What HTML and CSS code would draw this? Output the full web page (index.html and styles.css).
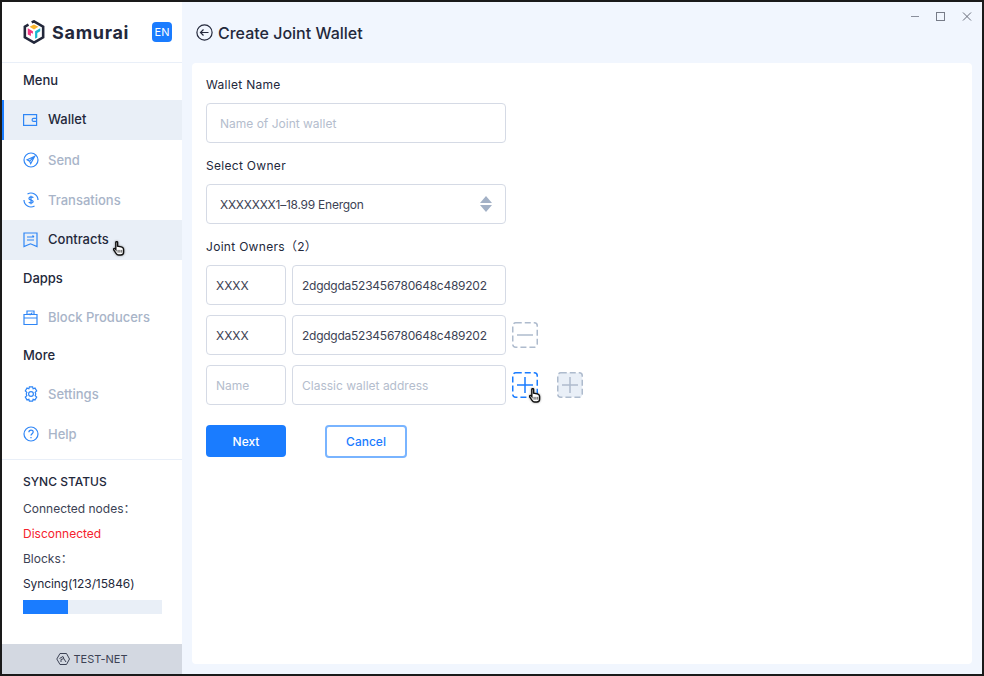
FILE: index.html
```html
<!DOCTYPE html>
<html lang="en">
<head>
    <meta charset="UTF-8">
    <title>Samurai - Create Joint Wallet</title>
    <link rel="stylesheet" href="styles.css">
</head>
<body>
    <div class="window">
        <aside class="sidebar">
            <div class="brand">
                <svg class="logo" width="22" height="24" viewBox="0 0 24 26">
                    <path d="M9.5 2.6 12 1.4l10 5.800v11.600L12 24.600 2 18.800V7.200l4-2.300" fill="none" stroke="#23283b" stroke-width="2.800"/>
                    <path d="M7.200 7.400 12 4.800l4.800 2.600L12 10.200z" fill="#f9b52c"/>
                    <path d="M5.200 9l5.600 3.200v2.800L8.600 13.800v3.600L5.200 15.600z" fill="#f0357f"/>
                    <path d="M18.800 9l-5.600 3.200V20.400l2.400-1.400v-5l3.200-1.800z" fill="#18b8d0"/>
                </svg>
                <span class="brand-name">Samurai</span>
                <span class="lang">EN</span>
            </div>

            <div class="nav-title nav-title-menu">Menu</div>
            <a class="nav-item selected">
                <svg width="16" height="16" viewBox="0 0 16 16" fill="none" stroke="#2f86f6" stroke-width="1.200">
                    <rect x=".6" y="2.600" width="13" height="10.800"/>
                    <path d="M13.600 6.400h-3a1.500 1.500 0 0 0 0 3h3"/>
                </svg>
                <span class="nav-text raised">Wallet</span>
            </a>
            <a class="nav-item">
                <svg width="16" height="16" viewBox="0 0 16 16" fill="none" stroke="#2f86f6" stroke-width="1.200">
                    <circle cx="8" cy="8" r="7"/>
                    <path d="M11.800 4.200 4.200 7.800l2.400 1.300 1.100 2.600zM11.800 4.200 6.600 9.100"/>
                </svg>
                <span class="nav-text muted">Send</span>
            </a>
            <a class="nav-item">
                <svg width="16" height="16" viewBox="0 0 16 16" fill="none" stroke="#2f86f6" stroke-width="1.200">
                    <path d="M4.500 2A7 7 0 0 1 15 8M11.500 14A7 7 0 0 1 1 8"/>
                    <path d="M10.300 5.800C9.800 4.700 6.200 4.500 5.900 6.300c-.3 2.200 4.500 1.400 4.300 3.500-.2 1.700-3.800 1.500-4.400.2M8 3.800v8.400"/>
                </svg>
                <span class="nav-text muted">Transations</span>
            </a>
            <a class="nav-item active">
                <svg width="16" height="16" viewBox="0 0 16 16" fill="none" stroke="#2f86f6" stroke-width="1.200">
                    <path d="M1 1h13v13.600l-6.500-2.800L1 14.600z"/>
                    <path d="M4 5h7M4 8h7M9.500 3.500 11 5"/>
                </svg>
                <span class="nav-text raised">Contracts</span>
            </a>

            <div class="nav-title">Dapps</div>
            <a class="nav-item">
                <svg width="16" height="16" viewBox="0 0 16 16" fill="none" stroke="#2f86f6" stroke-width="1.200">
                    <path d="M1 4.500h13v10H1zM1 8h13"/>
                    <path d="M4 4.500V1h7v3.500M5.600 3.600l1.500 1.200 2.300-2.200"/>
                </svg>
                <span class="nav-text raised muted">Block Producers</span>
            </a>

            <div class="nav-title nav-title-more">More</div>
            <a class="nav-item">
                <svg width="16" height="16" viewBox="0 0 16 16" fill="none" stroke="#2f86f6" stroke-width="1.200">
                    <path d="M6.400.8h3.200l.5 2 1.900-.7 1.700 2.800-1.500 1.400a3 3 0 0 1 0 3.400l1.500 1.400-1.700 2.800-1.900-.7-.5 2H6.400l-.5-2-1.900.7-1.700-2.800 1.500-1.400a3 3 0 0 1 0-3.400L2.300 4.900 4 2.100l1.900.7z"/>
                    <circle cx="8" cy="8" r="2.400"/>
                </svg>
                <span class="nav-text muted">Settings</span>
            </a>
            <a class="nav-item">
                <svg width="16" height="16" viewBox="0 0 16 16" fill="none" stroke="#2f86f6" stroke-width="1.200">
                    <circle cx="8" cy="8" r="7"/>
                    <path d="M5.900 6.200c0-2.800 4.300-2.800 4.300-.2 0 1.700-2.200 1.700-2.200 3.500"/>
                    <path d="M8 11v1.200"/>
                </svg>
                <span class="nav-text muted">Help</span>
            </a>

            <div class="sync">
                <div class="sync-title">SYNC STATUS</div>
                <div class="sync-line">Connected nodes：</div>
                <div class="sync-line danger">Disconnected</div>
                <div class="sync-line">Blocks：</div>
                <div class="sync-line dark">Syncing(123/15846)</div>
                <div class="progress"><div class="progress-bar" style="width: 32.4%"></div></div>
            </div>

            <div class="net">
                <svg width="14" height="14" viewBox="0 0 14 14" fill="none" stroke="#3c4254" stroke-width="1">
                    <path d="M4 1.500h6.500L13.500 7l-3 5.500H4L.8 7z"/>
                    <path d="M3.500 6.500 7 4.500l1 2-3 1v2.500M8 7l2 3"/>
                </svg>
                TEST-NET
            </div>
        </aside>

        <main class="main">
            <div class="topbar">
                <svg class="back" width="17" height="17" viewBox="0 0 17 17" fill="none" stroke="#23283b" stroke-width="1.200">
                    <circle cx="8.500" cy="8.500" r="7.600"/>
                    <path d="M12.500 8.500h-8M7.500 5.500l-3 3 3 3"/>
                </svg>
                <h1>Create Joint Wallet</h1>
                <div class="win-controls">
                    <svg width="10" height="10" viewBox="0 0 10 10" fill="none" stroke="#8a8f9c"><path d="M1 4.500h8"/></svg>
                    <svg width="10" height="10" viewBox="0 0 10 10" fill="none" stroke="#777c88"><rect x=".5" y=".5" width="8" height="8"/></svg>
                    <svg width="10" height="10" viewBox="0 0 10 10" fill="none" stroke="#666b78"><path d="M1 .5l8 8M9 .5l-8 8"/></svg>
                </div>
            </div>

            <section class="card">
                <div class="form-group">
                    <div class="label">Wallet Name</div>
                    <div class="field wide placeholder">Name of Joint wallet</div>
                </div>

                <div class="form-group">
                    <div class="label">Select Owner</div>
                    <div class="field wide select">
                        <span class="value">XXXXXXX1–18.99 Energon</span>
                        <svg width="12" height="16" viewBox="0 0 12 16" fill="#a3b1c6">
                            <path d="M6 0l6 7H0zM6 16l6-7H0z"/>
                        </svg>
                    </div>
                </div>

                <div class="form-group">
                    <div class="label">Joint Owners（2）</div>
                    <div class="owners">
                        <div class="owner-row">
                            <div class="field name-field">XXXX</div>
                            <div class="field addr-field value">2dgdgda523456780648c489202</div>
                        </div>
                        <div class="owner-row">
                            <div class="field name-field">XXXX</div>
                            <div class="field addr-field value">2dgdgda523456780648c489202</div>
                            <span class="dash-btn">
                                <svg class="dash-box" width="26" height="26" viewBox="0 0 26 26"><rect x=".75" y=".75" width="24.500" height="24.500" rx="3"/></svg>
                                <svg class="dash-sign" width="16" height="16" viewBox="0 0 16 16"><path d="M0 8h16"/></svg>
                            </span>
                        </div>
                        <div class="owner-row">
                            <div class="field name-field placeholder">Name</div>
                            <div class="field addr-field placeholder">Classic wallet address</div>
                            <span class="dash-btn hover">
                                <svg class="dash-box" width="26" height="26" viewBox="0 0 26 26"><rect x=".75" y=".75" width="24.500" height="24.500" rx="3"/></svg>
                                <svg class="dash-sign" width="16" height="16" viewBox="0 0 16 16"><path d="M0 8h16M8 0v16"/></svg>
                                <svg class="hand" width="12" height="15" viewBox="0 0 13 16">
                                    <path d="M3 1.500c0-1.300 2-1.300 2 0v4l4 .8c1.800.4 2.500 1.200 2.500 3v2.700c0 1.800-1.200 3-3 3H6c-1.300 0-2-.6-2.700-1.700L.8 9.500c-.6-1.200.8-2 1.700-1.100l.6.8z" fill="#fff" stroke="#111" stroke-width="1.500"/>
                                    <path d="M5.500 9.500v3M7.500 9.500v3M9.500 9.500v3" stroke="#111" stroke-width=".8"/>
                                </svg>
                            </span>
                            <span class="dash-btn filled">
                                <svg class="dash-box" width="26" height="26" viewBox="0 0 26 26"><rect x=".75" y=".75" width="24.500" height="24.500" rx="3"/></svg>
                                <svg class="dash-sign" width="16" height="16" viewBox="0 0 16 16"><path d="M0 8h16M8 0v16"/></svg>
                            </span>
                        </div>
                    </div>
                </div>

                <div class="actions">
                    <button class="btn btn-primary">Next</button>
                    <button class="btn btn-outline">Cancel</button>
                </div>
            </section>
        </main>

        <svg class="hand hand-nav" width="12" height="15" viewBox="0 0 13 16">
            <path d="M3 1.500c0-1.300 2-1.300 2 0v4l4 .8c1.800.4 2.500 1.200 2.500 3v2.700c0 1.800-1.200 3-3 3H6c-1.300 0-2-.6-2.700-1.700L.8 9.500c-.6-1.200.8-2 1.700-1.100l.6.8z" fill="#fff" stroke="#111" stroke-width="1.500"/>
            <path d="M5.500 9.500v3M7.500 9.500v3M9.500 9.500v3" stroke="#111" stroke-width=".8"/>
        </svg>
    </div>
</body>
</html>
```

FILE: styles.css
```css
* {
    box-sizing: border-box;
}
html, body {
    margin: 0;
    height: 100%;
    overflow: hidden;
}
body {
    font-family: Inter, "Noto Sans CJK SC", sans-serif;
    font-size: 12px;
    color: #23283b;
}
.window {
    position: relative;
    display: flex;
    width: 984px;
    height: 676px;
    border: 2px solid #1a1a1a;
    background: #f1f6fe;
}
.sidebar {
    display: flex;
    flex-direction: column;
    flex: 0 0 180px;
    background: #fff;
}
.brand {
    display: flex;
    align-items: center;
    flex: 0 0 61px;
    padding: 0 10px 0 21px;
    border-bottom: 1px solid #e9eff8;
}
.logo {
    flex: none;
}
.brand-name {
    margin-left: 7px;
    font-size: 18px;
    font-weight: 700;
    letter-spacing: .7px;
}
.lang {
    display: flex;
    align-items: center;
    justify-content: center;
    width: 20px;
    height: 20px;
    margin-left: auto;
    border-radius: 4px;
    background: #1a7cff;
    color: #fff;
    font-size: 11px;
}
.nav-title {
    display: flex;
    align-items: center;
    height: 38px;
    padding: 0 0 2px 21px;
    font-size: 13px;
    font-weight: 500;
}
.nav-title-menu {
    height: 37px;
    padding-bottom: 4px;
}
.nav-title-more {
    height: 36px;
}
.nav-item {
    display: flex;
    align-items: center;
    gap: 9px;
    height: 40px;
    padding-left: 21px;
    font-size: 13px;
    font-weight: 500;
}
.raised {
    margin-bottom: 2px;
}
.muted {
    color: #a8b4c8;
}
.nav-item.active,
.nav-item.selected {
    background: #e9eff7;
}
.nav-item.selected {
    border-left: 2px solid #1a7cff;
    padding-left: 19px;
}
.sync {
    margin-top: 5px;
    padding: 13px 20px 0 21px;
    border-top: 1px solid #e9eff8;
    flex: 1;
}
.sync-title {
    height: 18px;
    line-height: 18px;
    font-weight: 500;
}
.sync-line {
    height: 25px;
    line-height: 25px;
    color: #3c4254;
}
.sync-title + .sync-line {
    margin-top: 5px;
}
.sync-line.danger {
    color: #f5222d;
}
.sync-line.dark {
    color: #23283b;
    letter-spacing: -.1px;
}
.progress {
    height: 14px;
    margin-top: 4px;
    background: #e9eff7;
}
.progress-bar {
    height: 100%;
    background: #1a7cff;
}
.net {
    display: flex;
    align-items: center;
    justify-content: center;
    gap: 3px;
    flex: 0 0 30px;
    background: #d3d8e1;
    color: #3c4254;
    font-size: 11px;
}
.main {
    display: flex;
    flex-direction: column;
    flex: 1;
    padding: 0 10px 10px;
}
.topbar {
    position: relative;
    display: flex;
    align-items: center;
    flex: 0 0 61px;
    padding-left: 4px;
}
.back {
    flex: none;
}
h1 {
    margin: 0 0 0 5px;
    font-size: 16px;
    font-weight: 500;
}
.win-controls {
    position: absolute;
    top: 10px;
    right: 0;
    display: flex;
    gap: 16px;
}
.card {
    flex: 1;
    padding: 14px;
    border-radius: 4px;
    background: #fff;
}
.form-group {
    margin-bottom: 15px;
}
.label {
    height: 16px;
    line-height: 16px;
    margin-bottom: 10px;
    letter-spacing: .3px;
}
.field {
    display: flex;
    align-items: center;
    height: 40px;
    border: 1px solid #d5dae5;
    border-radius: 4px;
    background: #fff;
    color: #3c4254;
}
.field.wide {
    width: 300px;
    padding: 0 13px;
}
.field.placeholder {
    color: #b4bdcd;
}
.value {
    letter-spacing: -.25px;
}
.select {
    justify-content: space-between;
}
.owners {
    display: flex;
    flex-direction: column;
    gap: 10px;
}
.owner-row {
    display: flex;
    align-items: center;
    gap: 6px;
}
.name-field {
    width: 80px;
    padding-left: 9px;
}
.addr-field {
    width: 214px;
    padding-left: 9px;
}
.dash-btn {
    position: relative;
    display: flex;
    align-items: center;
    justify-content: center;
    width: 26px;
    height: 26px;
}
.dash-box {
    position: absolute;
    top: 0;
    left: 0;
    fill: none;
    stroke: #aebbcd;
    stroke-width: 1.5;
    stroke-dasharray: 6 3;
}
.dash-sign {
    position: relative;
    fill: none;
    stroke: #aebbcd;
    stroke-width: 1.5;
}
.hover .dash-box,
.hover .dash-sign {
    stroke: #1a7cff;
}
.filled {
    margin-left: 13px;
}
.filled .dash-box {
    fill: #e9eff7;
}
.hand {
    position: absolute;
    filter: drop-shadow(0 0 1px rgba(0,0,0,0.4));
}
.dash-btn .hand {
    left: 17px;
    top: 16px;
}
.hand-nav {
    left: 111px;
    top: 239px;
}
.actions {
    display: flex;
    gap: 39px;
    margin-top: 20px;
}
.btn {
    height: 32px;
    border-radius: 4px;
    font-family: inherit;
    font-size: 12px;
    font-weight: 500;
}
.btn-primary {
    width: 80px;
    border: none;
    background: #1a7cff;
    color: #fff;
}
.btn-outline {
    width: 82px;
    height: 33px;
    border: 2px solid #79b4ff;
    background: #fff;
    color: #1a7cff;
}
```
